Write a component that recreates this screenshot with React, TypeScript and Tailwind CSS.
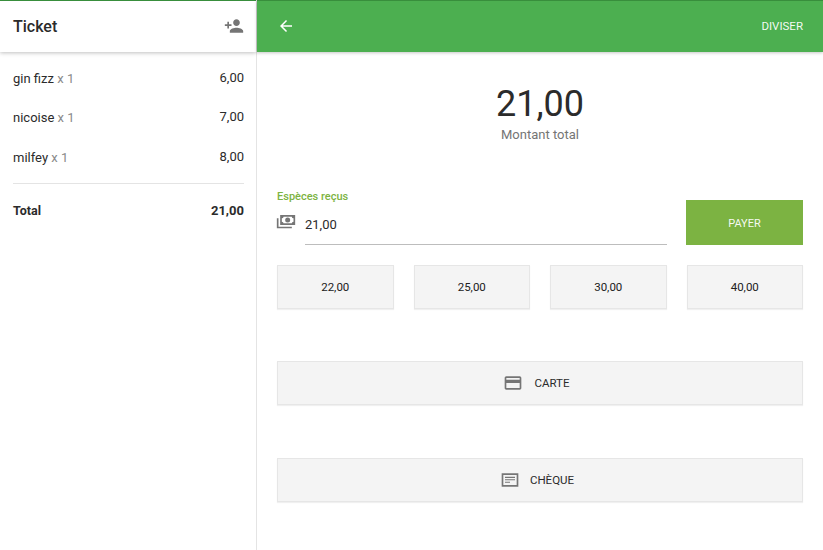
import React from "react";

const items = [
  ["gin fizz", "6,00"],
  ["nicoise", "7,00"],
  ["milfey", "8,00"],
];
const amounts = ["22,00", "25,00", "30,00", "40,00"];

function Icon({ d, size, className }: { d: string; size: number; className?: string }) {
  return (
    <svg width={size} height={size} viewBox="0 0 24 24" className={className} fill="currentColor">
      <path d={d} />
    </svg>
  );
}

export default function App() {
  return (
    <div className="flex h-[550px] w-[823px] overflow-hidden bg-white font-['Roboto',sans-serif] text-[#2b2b2b]">
      <aside className="flex w-[257px] shrink-0 flex-col border-r border-[#e4e4e4] bg-white">
        <header className="flex h-[52px] shrink-0 items-center justify-between border-t border-[#388e3c] pl-[13px] pr-[12px] shadow-[0_1px_4px_rgba(0,0,0,0.25)]">
          <span className="text-[16px] font-medium">Ticket</span>
          <Icon
            size={20}
            className="-mt-px text-[#757575]"
            d="M15 12c2.21 0 4-1.79 4-4s-1.79-4-4-4-4 1.79-4 4 1.79 4 4 4zm-9-2V7H4v3H1v2h3v3h2v-3h3v-2H6zm9 4c-2.67 0-8 1.34-8 4v2h16v-2c0-2.66-5.33-4-8-4z"
          />
        </header>
        <div className="flex flex-col px-[13px] pt-[6px] pr-[12px] text-[13px]">
          {items.map(([n, p]) => (
            <div key={n} className="flex h-[39.5px] items-center justify-between">
              <span className="pt-px">
                {n} <span className="text-[#8a8a8a]">x 1</span>
              </span>
              <span className="-mt-px">{p}</span>
            </div>
          ))}
          <div className="mt-[6px] flex h-[53px] items-center justify-between border-t border-[#e4e4e4] pt-[3px] font-bold">
            <span className="text-[12.5px]">Total</span>
            <span>21,00</span>
          </div>
        </div>
      </aside>

      <main className="flex min-w-0 flex-1 flex-col">
        <header className="flex h-[52px] shrink-0 items-center justify-between border-t border-[#388e3c] bg-[#4caf50] pl-[21px] pr-[20px] text-white shadow-[0_1px_3px_rgba(0,0,0,0.22)]">
          <Icon size={18} className="-ml-[1px] -mt-px" d="M20 11H7.83l5.59-5.59L12 4l-8 8 8 8 1.41-1.41L7.83 13H20v-2z" />
          <span className="text-[11.5px] font-normal text-white/95">DIVISER</span>
        </header>

        <div className="flex flex-1 flex-col px-[20px]">
          <div className="flex flex-col items-center pt-[31px]">
            <span className="text-[36px] leading-[42px]">21,00</span>
            <span className="pt-[1px] text-[13px] leading-[18px] text-[#757575]">Montant total</span>
          </div>

          <div className="mt-[45px] flex items-start gap-[19px]">
            <div className="min-w-0 flex-1">
              <div className="text-[11px] font-medium leading-[16px] text-[#7cb342]">Espèces reçus</div>
              <div className="mt-[4px] flex gap-[9px]">
                <Icon
                  size={20}
                  className="-ml-[1px] mt-[1px] shrink-0 text-[#757575]"
                  d="M5,6H23V18H5V6M14,9A3,3 0 0,1 17,12A3,3 0 0,1 14,15A3,3 0 0,1 11,12A3,3 0 0,1 14,9M9,8A2,2 0 0,1 7,10V14A2,2 0 0,1 9,16H19A2,2 0 0,1 21,14V10A2,2 0 0,1 19,8H9M1,10H3V20H19V22H1V10Z"
                />
                <div className="flex h-[36px] flex-1 items-start border-b border-[#bdbdbd] pt-[7px] text-[13px] leading-[18px]">
                  21,00
                </div>
              </div>
            </div>
            <button className="mt-[11px] h-[45px] w-[117px] shrink-0 bg-[#7cb342] pt-[3px] text-[11px] font-normal text-white/95">
              PAYER
            </button>
          </div>

          <div className="mt-[20px] grid grid-cols-4 gap-[20px]">
            {amounts.map((a) => (
              <button
                key={a}
                className="h-[44px] border border-[#e6e6e6] bg-[#f4f4f4] pt-[1px] text-[11.5px] font-normal text-[#212121] shadow-[0_1px_1px_rgba(0,0,0,0.06)]"
              >
                {a}
              </button>
            ))}
          </div>

          <button className="mt-[52px] flex h-[44px] items-center justify-center gap-[11px] border border-[#e6e6e6] bg-[#f4f4f4] pr-[7px] text-[11.5px] font-normal shadow-[0_1px_1px_rgba(0,0,0,0.06)]">
            <Icon
              size={20}
              className="text-[#757575]"
              d="M20 4H4c-1.11 0-1.99.89-1.99 2L2 18c0 1.11.89 2 2 2h16c1.11 0 2-.89 2-2V6c0-1.11-.89-2-2-2zm0 14H4v-6h16v6zm0-10H4V6h16v2z"
            />
            <span className="pt-[2px]">CARTE</span>
          </button>

          <button className="mt-[53px] flex h-[44px] items-center justify-center gap-[10px] border border-[#e6e6e6] bg-[#f4f4f4] pr-[6px] text-[11.5px] font-normal shadow-[0_1px_1px_rgba(0,0,0,0.06)]">
            <svg width={20} height={20} viewBox="0 0 24 24" className="text-[#757575]" fill="currentColor">
              <path d="M2 4h20v16H2V4zm2 2v12h16V6H4zm2 2h12v1.5H6V8zm0 3h12v1.2H6V11zm0 3h6v1.2H6V14z" />
            </svg>
            <span className="pt-[1px]">CHÈQUE</span>
          </button>
        </div>
      </main>
    </div>
  );
}
